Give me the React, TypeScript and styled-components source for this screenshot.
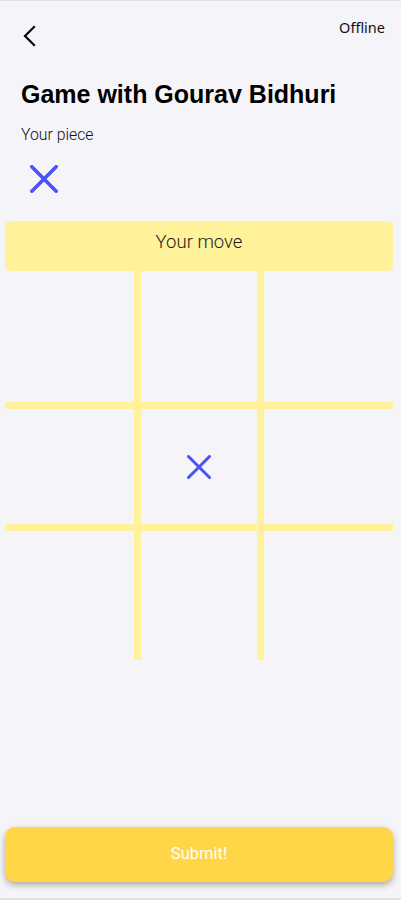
import React from "react";
import styled, { createGlobalStyle } from "styled-components";

const Global = createGlobalStyle`
  html, body { margin: 0; padding: 0; background: #f4f4f9; }
  body { font-family: Roboto, "Noto Sans", sans-serif; }
  * { box-sizing: border-box; }
`;

const Page = styled.div`
  display: flex;
  flex-direction: column;
  min-height: 900px;
  border-top: 1px solid #e2e2e6;
  border-bottom: 2px solid #e2e2e6;
  background: #f4f4f9;
`;

const TopBar = styled.div`
  display: flex;
  justify-content: space-between;
  align-items: flex-start;
  padding: 17px 16px 0 22px;
  height: 60px;
`;

const BackButton = styled.button`
  border: 0;
  background: none;
  padding: 0;
  margin-top: 7px;
  width: 18px;
  height: 22px;
  display: flex;
  cursor: pointer;
`;

const Status = styled.span`
  font-family: "Noto Sans", Roboto, sans-serif;
  font-size: 14.5px;
  color: #111;
  margin-top: -1px;
`;

const Title = styled.h1`
  margin: 18px 0 0 21px;
  font-family: "Liberation Sans", Arial, sans-serif;
  font-weight: 700;
  font-size: 25px;
  line-height: 30px;
  color: #000;
`;

const Label = styled.div`
  margin: 17px 0 0 21px;
  font-size: 15.8px;
  font-weight: 300;
  color: #111;
  line-height: 18px;
`;

const PieceWrap = styled.div`
  margin: 21px 0 0 30px;
  width: 28px;
  height: 28px;
`;

const Banner = styled.div`
  margin: 28px 8px 0 5px;
  height: 50px;
  background: #fff29a;
  border-radius: 5px;
  display: flex;
  align-items: center;
  justify-content: center;
  font-size: 18.5px;
  font-weight: 300;
  color: #1a1a1a;
  padding-bottom: 8px;
`;

const Board = styled.div`
  margin: 0 8px 0 5px;
  display: grid;
  grid-template-columns: 129px 116px 129px;
  grid-template-rows: 131px 115px 129px;
  gap: 7px;
  background: #fff29a;
  width: 388px;
`;

const Cell = styled.div`
  background: #f4f4f9;
  display: flex;
  align-items: center;
  justify-content: center;
`;

const Spacer = styled.div`
  flex: 1;
`;

const Submit = styled.button`
  margin: 0 8px 16px 5px;
  height: 55px;
  border: 0;
  border-radius: 10px;
  background: #ffd647;
  color: #fff;
  font-family: Roboto, sans-serif;
  font-size: 16.5px;
  padding-bottom: 3px;
  box-shadow: 0 3px 6px rgba(90, 80, 40, 0.45);
  cursor: pointer;
`;

const Cross = ({ size, stroke }: { size: number; stroke: number }) => (
  <svg width={size} height={size} viewBox={`0 0 ${size} ${size}`}>
    <path
      d={`M${stroke / 2} ${stroke / 2} L${size - stroke / 2} ${size - stroke / 2} M${size - stroke / 2} ${stroke / 2} L${stroke / 2} ${size - stroke / 2}`}
      stroke="#4a52f7"
      strokeWidth={stroke}
      strokeLinecap="round"
      fill="none"
    />
  </svg>
);

const cells = ["", "", "", "", "x", "", "", "", ""];

export default function App() {
  return (
    <>
      <Global />
      <Page>
        <TopBar>
          <BackButton aria-label="Back">
            <svg width="14" height="22" viewBox="0 0 14 22">
              <path d="M12 2 L3 11 L12 20" stroke="#000" strokeWidth="2.2" fill="none" strokeLinecap="square" />
            </svg>
          </BackButton>
          <Status>Offline</Status>
        </TopBar>
        <Title>Game with Gourav Bidhuri</Title>
        <Label>Your piece</Label>
        <PieceWrap>
          <Cross size={28} stroke={3.6} />
        </PieceWrap>
        <Banner>Your move</Banner>
        <Board>
          {cells.map((c, i) => (
            <Cell key={i}>{c === "x" ? <Cross size={24} stroke={3} /> : null}</Cell>
          ))}
        </Board>
        <Spacer />
        <Submit>Submit!</Submit>
      </Page>
    </>
  );
}
